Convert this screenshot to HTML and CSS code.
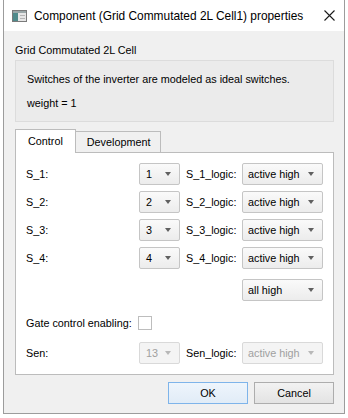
FILE: index.html
```html
<!DOCTYPE html>
<html>
<head>
<meta charset="utf-8">
<link rel="stylesheet" href="styles.css">
</head>
<body>
<div class="window">
  <div class="titlebar">
    <svg class="app-icon" width="15" height="12" viewBox="0 0 15 12">
      <rect x="0.5" y="0.5" width="14" height="11" fill="#e6e6e6" stroke="#7a7a7a"/>
      <rect x="1" y="1" width="5" height="10" fill="#4f8a8b"/>
      <rect x="1" y="1" width="13" height="2" fill="#9aa7a8"/>
      <line x1="8" y1="5.5" x2="13" y2="5.5" stroke="#b5b5b5"/>
      <line x1="8" y1="8.5" x2="13" y2="8.5" stroke="#b5b5b5"/>
    </svg>
    <span class="title">Component (Grid Commutated 2L Cell1) properties</span>
    <svg class="close" width="11" height="11" viewBox="0 0 11 11">
      <path d="M0.5 0.5 L10.5 10.5 M10.5 0.5 L0.5 10.5" stroke="#1a1a1a" stroke-width="1.1" fill="none"/>
    </svg>
  </div>
  <div class="content">
    <div class="heading">Grid Commutated 2L Cell</div>
    <div class="desc">
      <div class="desc-line">Switches of the inverter are modeled as ideal switches.</div>
      <div class="desc-line">weight = 1</div>
    </div>
    <div class="tabs">
      <div class="tabbar">
        <div class="tab active">Control</div>
        <div class="tab">Development</div>
      </div>
      <div class="pane">
        <div class="form">
          <span class="lbl">S_1:</span>
          <div class="combo small"><span>1</span><i class="arrow"></i></div>
          <span class="lbl2">S_1_logic:</span>
          <div class="combo wide"><span>active high</span><i class="arrow"></i></div>

          <span class="lbl">S_2:</span>
          <div class="combo small"><span>2</span><i class="arrow"></i></div>
          <span class="lbl2">S_2_logic:</span>
          <div class="combo wide"><span>active high</span><i class="arrow"></i></div>

          <span class="lbl">S_3:</span>
          <div class="combo small"><span>3</span><i class="arrow"></i></div>
          <span class="lbl2">S_3_logic:</span>
          <div class="combo wide"><span>active high</span><i class="arrow"></i></div>

          <span class="lbl">S_4:</span>
          <div class="combo small"><span>4</span><i class="arrow"></i></div>
          <span class="lbl2">S_4_logic:</span>
          <div class="combo wide"><span>active high</span><i class="arrow"></i></div>
        </div>
        <div class="allrow">
          <div class="combo wide"><span>all high</span><i class="arrow"></i></div>
        </div>
        <div class="gaterow">
          <span class="lbl">Gate control enabling:</span>
          <span class="check"></span>
        </div>
        <div class="form senrow">
          <span class="lbl">Sen:</span>
          <div class="combo small disabled"><span>13</span><i class="arrow"></i></div>
          <span class="lbl2">Sen_logic:</span>
          <div class="combo wide disabled"><span>active high</span><i class="arrow"></i></div>
        </div>
      </div>
    </div>
    <div class="buttons">
      <div class="btn default">OK</div>
      <div class="btn">Cancel</div>
    </div>
  </div>
</div>
</body>
</html>
```

FILE: styles.css
```css
html, body {
  margin: 0;
  padding: 0;
  background: #ffffff;
}
body {
  font-family: "Liberation Sans", Arial, sans-serif;
  font-size: 10.8px;
  color: #000;
}
.window {
  margin-left: 3px;
  width: 340px;
  height: 413px;
  border: 1px solid #9c9c9c;
  border-top: none;
  display: flex;
  flex-direction: column;
  background: #f0f0f0;
}
.titlebar {
  height: 31px;
  background: #ffffff;
  display: flex;
  align-items: center;
  padding-left: 8px;
  padding-right: 8px;
  flex: none;
}
.app-icon {
  flex: none;
  margin-right: 7px;
}
.title {
  font-family: "Liberation Sans", Arial, sans-serif;
  font-size: 11.9px;
  flex: 1;
  white-space: nowrap;
}
.close {
  flex: none;
  margin-right: 1px;
}
.content {
  flex: 1;
  display: flex;
  flex-direction: column;
  padding: 0 10px 0 11px;
}
.heading {
  height: 28px;
  line-height: 38px;
  margin-bottom: 1px;
}
.desc {
  height: 60px;
  background: #ebebeb;
  border: 1px solid #dcdcdc;
  padding: 0 11px;
  display: flex;
  flex-direction: column;
  justify-content: center;
  gap: 12px;
}
.tabs {
  margin-top: 7px;
  display: flex;
  flex-direction: column;
}
.tabbar {
  display: flex;
  align-items: flex-end;
  height: 23px;
  padding-left: 0;
}
.tab {
  height: 20px;
  line-height: 20px;
  padding: 0 10px;
  border: 1px solid #bcbcbc;
  border-bottom: none;
  background: #f0f0f0;
  margin-left: -1px;
}
.tab.active {
  height: 23px;
  line-height: 22px;
  background: #ffffff;
  margin-left: 0;
  position: relative;
  z-index: 1;
  margin-bottom: -1px;
  padding: 0 12px;
}
.tab:not(.active) {
  padding: 0 10px 0 11px;
}
.pane {
  height: 223px;
  background: #ffffff;
  border: 1px solid #bcbcbc;
  box-sizing: border-box;
  padding: 10px 10px 0 10px;
}
.form {
  display: grid;
  grid-template-columns: 1fr 41px 62px 81px;
  row-gap: 6px;
  align-items: center;
}
.lbl2 {
  padding-left: 6px;
}
.combo {
  height: 22px;
  box-sizing: border-box;
  border: 1px solid #c5c5c5;
  border-radius: 2px;
  background: linear-gradient(#fafafa, #ececec);
  display: flex;
  align-items: center;
  justify-content: space-between;
  padding: 0 8px 0 6px;
}
.combo.wide {
  width: 81px;
  padding-left: 5px;
}
.combo.small {
  width: 41px;
}
.arrow {
  width: 0;
  height: 0;
  border-left: 3.5px solid transparent;
  border-right: 3.5px solid transparent;
  border-top: 4px solid #606060;
}
.combo.disabled {
  color: #a0a0a0;
  background: #f4f4f4;
  border-color: #d9d9d9;
}
.combo.disabled .arrow {
  border-top-color: #b8b8b8;
}
.allrow {
  display: flex;
  justify-content: flex-end;
  margin-top: 10px;
}
.gaterow {
  display: flex;
  align-items: center;
  height: 14px;
  margin-top: 15px;
  gap: 6px;
}
.check {
  width: 14px;
  height: 14px;
  box-sizing: border-box;
  border: 1px solid #bdbdbd;
  background: #fff;
}
.senrow {
  margin-top: 12px;
}
.buttons {
  display: flex;
  justify-content: flex-end;
  gap: 6px;
  margin-top: 7px;
}
.btn {
  width: 80px;
  height: 22px;
  box-sizing: border-box;
  border: 1px solid #adadad;
  background: linear-gradient(#f2f2f2, #e3e3e3);
  text-align: center;
  line-height: 20px;
}
.btn.default {
  border-color: #7eb4ea;
  background: linear-gradient(#eef5fc, #e1ecf7);
}
```
